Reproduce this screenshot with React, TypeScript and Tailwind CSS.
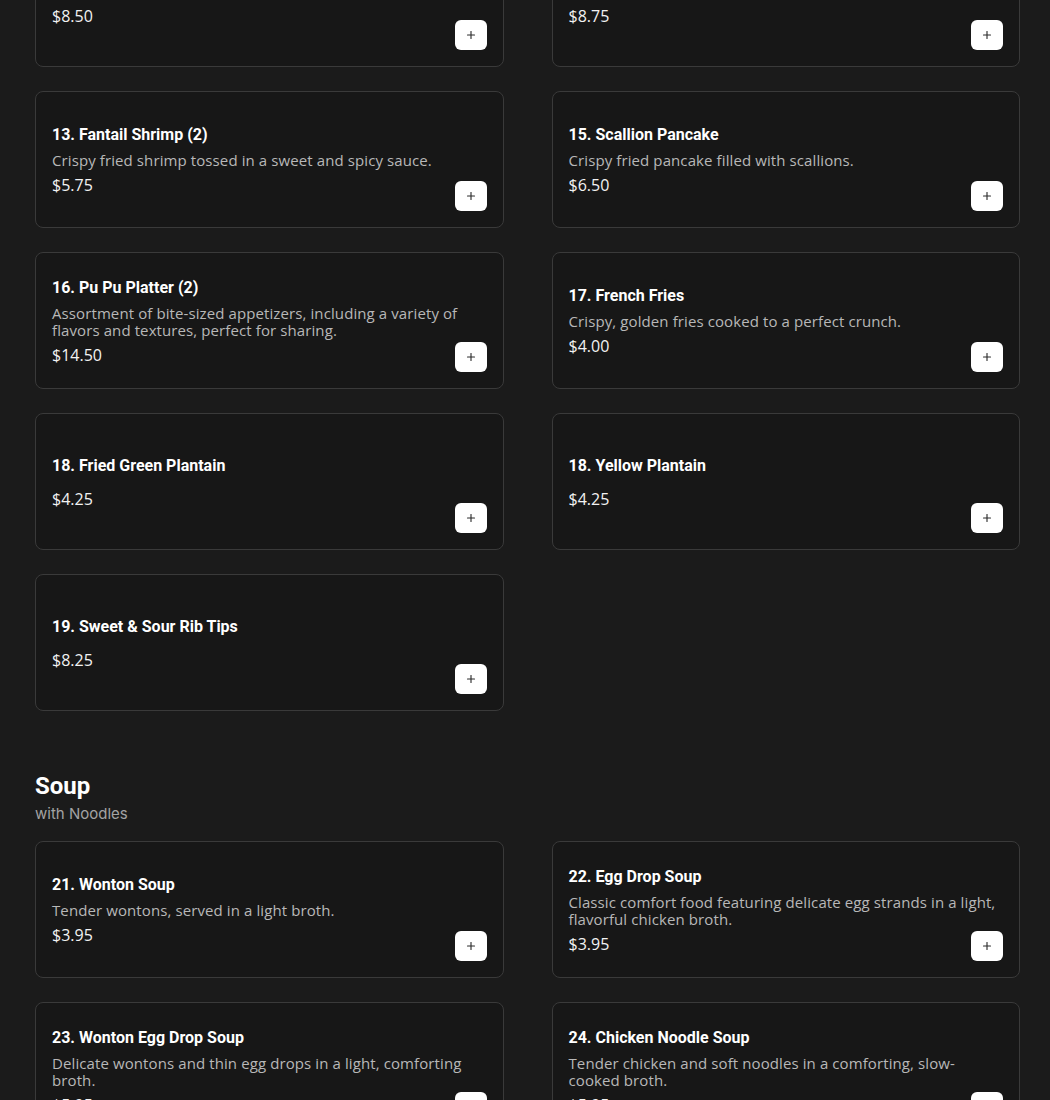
import { Plus } from 'lucide-react';

type MenuItem = {
  id: string;
  name: string;
  description?: string;
  price: string;
};

const APPETIZERS: MenuItem[] = [
  { id: '11', name: '11. Boneless Spare Ribs', price: '$8.50' },
  { id: '12', name: '12. Chicken Wings (4)', price: '$8.75' },
  { id: '13', name: '13. Fantail Shrimp (2)', description: 'Crispy fried shrimp tossed in a sweet and spicy sauce.', price: '$5.75' },
  { id: '15', name: '15. Scallion Pancake', description: 'Crispy fried pancake filled with scallions.', price: '$6.50' },
  {
    id: '16',
    name: '16. Pu Pu Platter (2)',
    description: 'Assortment of bite-sized appetizers, including a variety of flavors and textures, perfect for sharing.',
    price: '$14.50',
  },
  { id: '17', name: '17. French Fries', description: 'Crispy, golden fries cooked to a perfect crunch.', price: '$4.00' },
  { id: '18a', name: '18. Fried Green Plantain', price: '$4.25' },
  { id: '18b', name: '18. Yellow Plantain', price: '$4.25' },
  { id: '19', name: '19. Sweet & Sour Rib Tips', price: '$8.25' },
];

const SOUPS: MenuItem[] = [
  { id: '21', name: '21. Wonton Soup', description: 'Tender wontons, served in a light broth.', price: '$3.95' },
  {
    id: '22',
    name: '22. Egg Drop Soup',
    description: 'Classic comfort food featuring delicate egg strands in a light, flavorful chicken broth.',
    price: '$3.95',
  },
  {
    id: '23',
    name: '23. Wonton Egg Drop Soup',
    description: 'Delicate wontons and thin egg drops in a light, comforting broth.',
    price: '$5.95',
  },
  {
    id: '24',
    name: '24. Chicken Noodle Soup',
    description: 'Tender chicken and soft noodles in a comforting, slow-cooked broth.',
    price: '$5.95',
  },
];

function MenuCard({ item }: { item: MenuItem }) {
  return (
    <div className="relative flex h-[137px] items-center rounded-lg border border-[#3a3a3a] bg-[#171717] p-4">
      <div className="flex w-full flex-col">
        <h3 className="mb-[5px] font-['Roboto',sans-serif] text-[16px] font-bold leading-6 text-white">{item.name}</h3>
        {item.description && (
          <p className="font-['Open_Sans',sans-serif] text-[15px] leading-[17px] tracking-[0.1px] text-[#b8b8b8]">
            {item.description}
          </p>
        )}
        <p className="mt-[5px] font-['Open_Sans',sans-serif] text-[16px] leading-[22px] text-[#f2f2f2]">{item.price}</p>
      </div>
      <button
        type="button"
        aria-label={`Add ${item.name}`}
        className="absolute bottom-[16px] right-[16px] flex h-[30px] w-[32px] items-center justify-center rounded-md bg-white text-[#2a2a2a]"
      >
        <Plus size={12} strokeWidth={2.25} />
      </button>
    </div>
  );
}

export default function App() {
  return (
    <div className="min-h-[1100px] overflow-hidden bg-[#1b1b1b]">
      <div className="-mt-[70px] w-[1020px] pl-[35px]">
        <div className="grid grid-cols-2 gap-x-[48px] gap-y-6">
          {APPETIZERS.map((item) => (
            <MenuCard key={item.id} item={item} />
          ))}
        </div>

        <div className="mt-[59px]">
          <h2 className="font-['Roboto',sans-serif] text-[24px] font-bold leading-8 text-white">Soup</h2>
          <p className="mt-[2px] font-['Inter',sans-serif] text-[15px] leading-5 text-[#a3a3a3]">with Noodles</p>
        </div>

        <div className="mt-[17px] grid grid-cols-2 gap-x-[48px] gap-y-6">
          {SOUPS.map((item) => (
            <MenuCard key={item.id} item={item} />
          ))}
        </div>
      </div>
    </div>
  );
}
